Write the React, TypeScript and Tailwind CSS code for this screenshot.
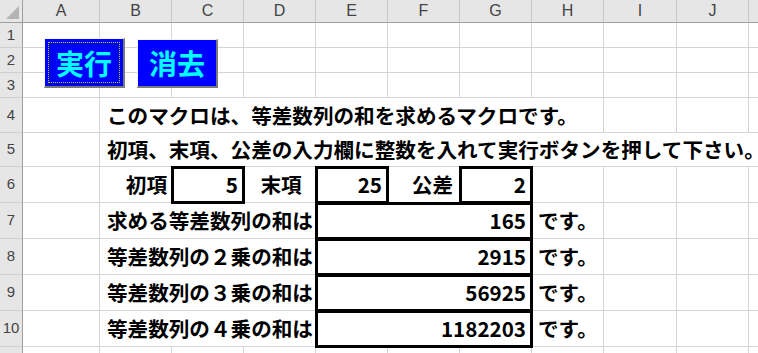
import React from 'react';

const COLS = ['A', 'B', 'C', 'D', 'E', 'F', 'G', 'H', 'I', 'J', 'K'];

const cell = 'border-r border-b border-[#d4d4d4] bg-white';
const jp = 'font-["Noto_Sans_CJK_JP",sans-serif] font-bold text-[20.6px] text-black whitespace-nowrap';
const box = 'relative z-10 outline-3 outline-black -outline-offset-2';

const RowNum: React.FC<{ n: number }> = ({ n }) => (
  <div className="flex items-center justify-center bg-[#e6e6e6] border-r border-r-[#9e9e9e] border-b border-b-[#cfcfcf] font-['Liberation_Sans',sans-serif] text-[15px] text-[#444]">
    {n}
  </div>
);

const Empty: React.FC<{ count: number }> = ({ count }) => (
  <>
    {Array.from({ length: count }).map((_, i) => (
      <div key={i} className={cell} />
    ))}
  </>
);

const Button: React.FC<{ label: string; focused?: boolean; className: string }> = ({ label, focused, className }) => (
  <div
    className={`absolute z-20 flex items-center justify-center bg-[#0000ff] border-t border-l border-t-[#f4f4f4] border-l-[#f4f4f4] border-r-2 border-b-2 border-r-[#7a7a7a] border-b-[#7a7a7a] ${className}`}
  >
    {focused && <div className="absolute inset-[3px] border border-dotted border-[#c8d400]" />}
    <span className="font-['Noto_Sans_CJK_JP',sans-serif] font-bold text-[28px] leading-none text-[#00ffff]">{label}</span>
  </div>
);

const App: React.FC = () => {
  const sums = [
    ['求める等差数列の和は', '165'],
    ['等差数列の２乗の和は', '2915'],
    ['等差数列の３乗の和は', '56925'],
    ['等差数列の４乗の和は', '1182203'],
  ];

  return (
    <div className="relative w-[758px] h-[353px] overflow-hidden bg-white">
      <div className="grid grid-cols-[23px_77px_72px_72px_72px_72px_72px_72px_72px_73px_72px_72px] grid-rows-[23px_25px_25px_25px_35px_34px_36px_36px_36px_36px_36px_36px]">
        {/* header row */}
        <div className="relative bg-[#e6e6e6] border-r border-b border-[#9e9e9e]">
          <svg className="absolute right-[3px] bottom-[3px]" width="13" height="13" viewBox="0 0 13 13">
            <polygon points="13,0 13,13 0,13" fill="#b4b4b4" />
          </svg>
        </div>
        {COLS.map((c) => (
          <div
            key={c}
            className="flex items-center justify-center bg-[#e6e6e6] border-r border-r-[#c8c8c8] border-b border-b-[#9e9e9e] font-['Liberation_Sans',sans-serif] text-[16px] text-[#444]"
          >
            {c}
          </div>
        ))}

        {[1, 2, 3].map((n) => (
          <React.Fragment key={n}>
            <RowNum n={n} />
            <Empty count={11} />
          </React.Fragment>
        ))}

        {/* row 4 */}
        <RowNum n={4} />
        <Empty count={1} />
        <div className={`col-span-7 flex items-center pl-[7px] ${cell} ${jp}`}>
          このマクロは、等差数列の和を求めるマクロです。
        </div>
        <Empty count={3} />

        {/* row 5 */}
        <RowNum n={5} />
        <Empty count={1} />
        <div className={`col-span-10 flex items-center pl-[7px] ${cell} ${jp}`}>
          初項、末項、公差の入力欄に整数を入れて実行ボタンを押して下さい。
        </div>

        {/* row 6 */}
        <RowNum n={6} />
        <Empty count={1} />
        <div className={`flex items-center justify-end pr-[4px] ${cell} ${jp}`}>初項</div>
        <div className={`flex items-center justify-end pr-[5px] ${cell} ${box} ${jp}`}>5</div>
        <div className={`flex items-center justify-center pl-[3px] ${cell} ${jp}`}>末項</div>
        <div className={`flex items-center justify-end pr-[5px] ${cell} ${box} ${jp}`}>25</div>
        <div className={`flex items-center justify-end pr-[6px] ${cell} ${jp}`}>公差</div>
        <div className={`flex items-center justify-end pr-[5px] ${cell} ${box} ${jp}`}>2</div>
        <Empty count={4} />

        {/* rows 7-10 */}
        {sums.map(([label, value], i) => (
          <React.Fragment key={label}>
            <RowNum n={7 + i} />
            <Empty count={1} />
            <div className={`col-span-3 flex items-center pl-[7px] ${cell} ${jp}`}>{label}</div>
            <div className={`col-span-3 flex items-center justify-end pr-[5px] ${cell} ${box} ${jp}`}>{value}</div>
            <div className={`flex items-center pl-[6px] ${cell} ${jp}`}>です。</div>
            <Empty count={3} />
          </React.Fragment>
        ))}

        {/* row 11 */}
        <RowNum n={11} />
        <Empty count={11} />
      </div>

      <Button label="実行" focused className="left-[44px] top-[38px] w-[81px] h-[50px]" />
      <Button label="消去" className="left-[137px] top-[39px] w-[81px] h-[49px]" />
    </div>
  );
};

export default App;
